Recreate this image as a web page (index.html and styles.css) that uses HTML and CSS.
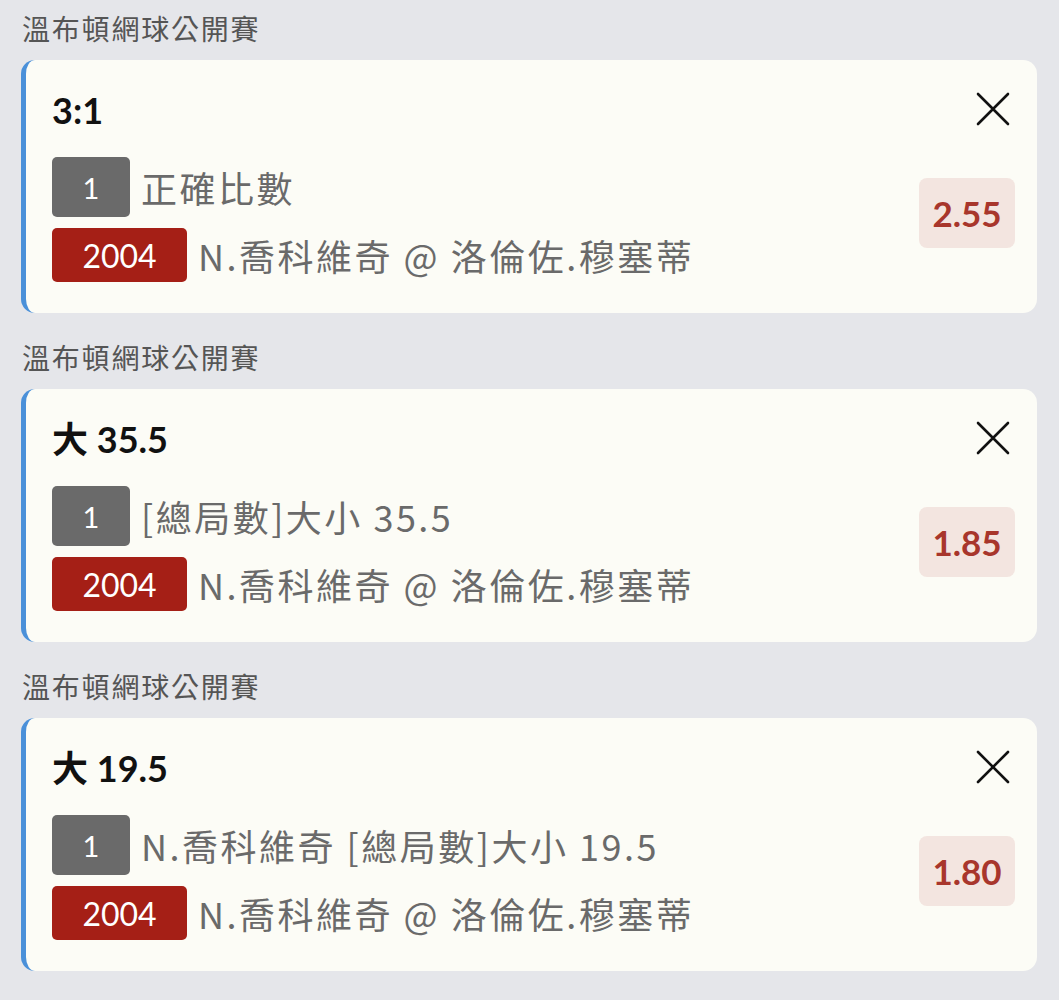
FILE: index.html
```html
<!DOCTYPE html>
<html lang="zh-Hant">
<head>
  <meta charset="UTF-8">
  <meta name="viewport" content="width=device-width, initial-scale=1.0">
  <title>投注單</title>
  <link rel="stylesheet" href="styles.css">
</head>
<body>
  <div class="slip">
    <section class="bet">
      <div class="league">溫布頓網球公開賽</div>
      <div class="card">
        <div class="main">
          <div class="pick">3:1</div>
          <div class="row">
            <span class="tag tag-grey">1</span>
            <span class="text">正確比數</span>
          </div>
          <div class="row">
            <span class="tag tag-red">2004</span>
            <span class="text">N.喬科維奇 @ 洛倫佐.穆塞蒂</span>
          </div>
        </div>
        <div class="side">
          <button class="close" aria-label="移除">
            <svg width="34" height="34" viewBox="0 0 34 34"><path d="M2 2 L32 32 M32 2 L2 32" stroke="#111" stroke-width="2.6" stroke-linecap="round" fill="none"/></svg>
          </button>
          <div class="odds">2.55</div>
        </div>
      </div>
    </section>

    <section class="bet">
      <div class="league">溫布頓網球公開賽</div>
      <div class="card">
        <div class="main">
          <div class="pick">大 35.5</div>
          <div class="row">
            <span class="tag tag-grey">1</span>
            <span class="text">[總局數]大小 35.5</span>
          </div>
          <div class="row">
            <span class="tag tag-red">2004</span>
            <span class="text">N.喬科維奇 @ 洛倫佐.穆塞蒂</span>
          </div>
        </div>
        <div class="side">
          <button class="close" aria-label="移除">
            <svg width="34" height="34" viewBox="0 0 34 34"><path d="M2 2 L32 32 M32 2 L2 32" stroke="#111" stroke-width="2.6" stroke-linecap="round" fill="none"/></svg>
          </button>
          <div class="odds">1.85</div>
        </div>
      </div>
    </section>

    <section class="bet">
      <div class="league">溫布頓網球公開賽</div>
      <div class="card">
        <div class="main">
          <div class="pick">大 19.5</div>
          <div class="row">
            <span class="tag tag-grey">1</span>
            <span class="text">N.喬科維奇 [總局數]大小 19.5</span>
          </div>
          <div class="row">
            <span class="tag tag-red">2004</span>
            <span class="text">N.喬科維奇 @ 洛倫佐.穆塞蒂</span>
          </div>
        </div>
        <div class="side">
          <button class="close" aria-label="移除">
            <svg width="34" height="34" viewBox="0 0 34 34"><path d="M2 2 L32 32 M32 2 L2 32" stroke="#111" stroke-width="2.6" stroke-linecap="round" fill="none"/></svg>
          </button>
          <div class="odds">1.80</div>
        </div>
      </div>
    </section>
  </div>
</body>
</html>
```

FILE: styles.css
```css
body {
  margin: 0;
  background-color: #e5e6ea;
  font-family: "Lato", "Noto Sans CJK TC", sans-serif;
  color: #333;
}
.slip {
  padding: 0 22px 0 21px;
}
.bet {
  padding-top: 8px;
  margin-bottom: 16px;
}
.league {
  font-family: "Noto Sans CJK TC", sans-serif;
  font-size: 28px;
  line-height: 40px;
  letter-spacing: 1.8px;
  color: #555;
  padding-left: 1px;
  margin-bottom: 12px;
}
.card {
  display: flex;
  height: 253px;
  box-sizing: border-box;
  padding: 28px 22px 31px 26px;
  background-color: #fcfcf6;
  border-left: 5px solid #4a90d9;
  border-radius: 14px;
}
.main {
  flex: 1;
}
.pick {
  font-family: "Lato", "Noto Sans CJK TC", sans-serif;
  font-weight: bold;
  font-size: 36px;
  line-height: 44px;
  color: #111;
  margin-bottom: 25px;
}
.row {
  display: flex;
  align-items: center;
  margin-bottom: 11px;
}
.row:last-child {
  margin-bottom: 0;
}
.tag {
  display: flex;
  align-items: center;
  justify-content: center;
  color: #fff;
  font-family: "Lato", sans-serif;
  border-radius: 5px;
  margin-right: 11px;
}
.tag-grey {
  width: 78px;
  height: 60px;
  font-size: 29px;
  background-color: #6a6a6a;
}
.tag-red {
  width: 135px;
  height: 54px;
  font-size: 32px;
  background-color: #a51f16;
}
.text {
  font-family: "Noto Sans CJK TC", sans-serif;
  font-size: 36px;
  letter-spacing: 2.5px;
  color: #6a6a6a;
  line-height: 54px;
}
.side {
  display: flex;
  flex-direction: column;
  align-items: flex-end;
}
.close {
  background: none;
  border: none;
  padding: 0;
  margin: 4px 5px 0 0;
  width: 34px;
  height: 34px;
  cursor: pointer;
}
.close svg {
  display: block;
}
.odds {
  margin-top: 52px;
  width: 96px;
  height: 70px;
  display: flex;
  align-items: center;
  justify-content: center;
  background-color: #f3e5e0;
  border-radius: 8px;
  color: #a8362c;
  font-weight: bold;
  font-size: 35px;
}
```
